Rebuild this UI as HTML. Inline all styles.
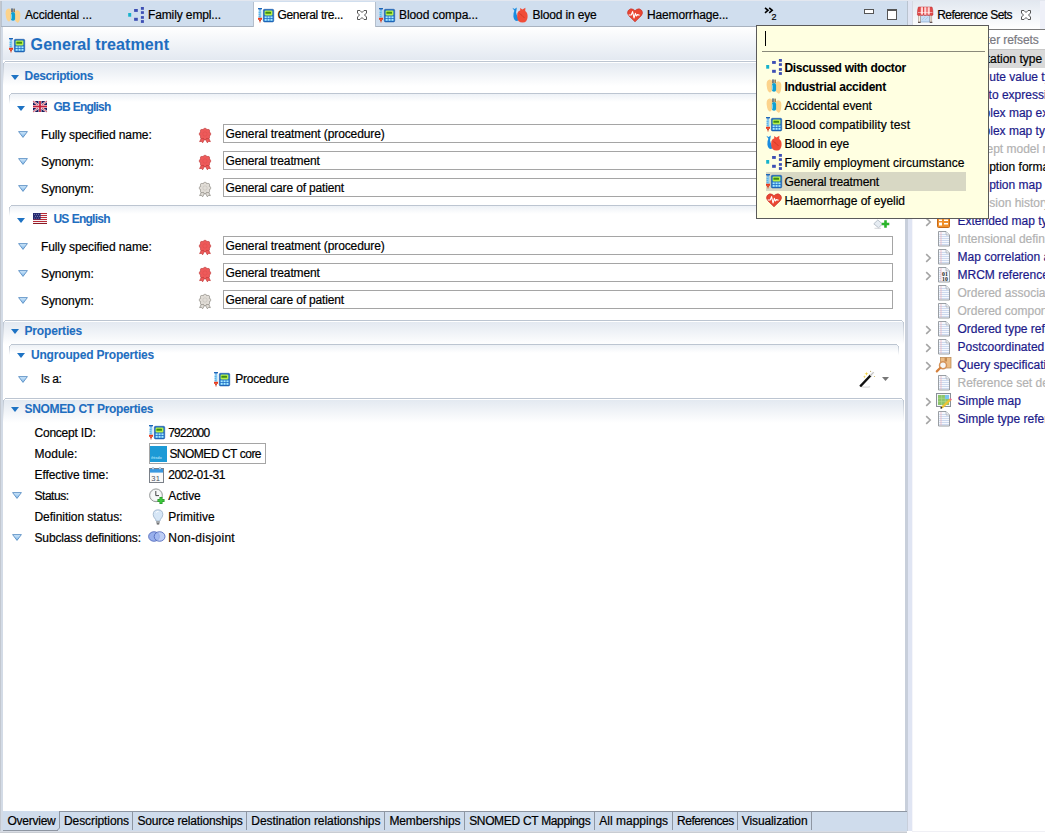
<!DOCTYPE html>
<html><head><meta charset="utf-8"><style>
html,body{margin:0;padding:0;width:1045px;height:833px;overflow:hidden;background:#fff;position:relative}
.t{position:absolute;font-family:"Liberation Sans", sans-serif;white-space:pre;-webkit-text-stroke:0.2px currentColor}
svg{overflow:visible}
</style></head><body>
<div style="position:absolute;left:0px;top:0px;width:1045px;height:833px;background:#fff"></div>
<div style="position:absolute;left:0px;top:0px;width:1045px;height:2px;background:#e3e7ef"></div>
<div style="position:absolute;left:0px;top:1px;width:1px;height:832px;background:#c3c8d0"></div>
<div style="position:absolute;left:1px;top:27px;width:2px;height:804px;background:#d3dbe6"></div>
<div style="position:absolute;left:1px;top:1px;width:907px;height:25px;background:#d0deee"></div>
<div style="position:absolute;left:1px;top:1px;width:1px;height:26px;background:#b9c3cf"></div>
<div style="position:absolute;left:1px;top:26px;width:907px;height:1px;background:#a9b3c0"></div>
<div style="position:absolute;left:907px;top:1px;width:1px;height:26px;background:#b9c3cf"></div>
<div style="position:absolute;left:905px;top:27px;width:3px;height:804px;background:#c8cfdb"></div>
<div style="position:absolute;left:908px;top:1px;width:4px;height:830px;background:#e0e5f3"></div>
<div style="position:absolute;left:912px;top:30px;width:1px;height:801px;background:#f6f6fa"></div>
<div style="position:absolute;left:912px;top:831px;width:133px;height:1px;background:#f0f0f5"></div>
<div style="position:absolute;left:0px;top:831px;width:907px;height:1px;background:#d8dce4"></div>
<div style="position:absolute;left:0px;top:832px;width:907px;height:1px;background:#c8ccd2"></div>
<div style="position:absolute;left:254px;top:2px;width:121px;height:25px;background:#fff"></div>
<div style="position:absolute;left:253px;top:2px;width:1px;height:25px;background:#b5bfcc"></div>
<div style="position:absolute;left:375px;top:2px;width:1px;height:25px;background:#b5bfcc"></div>
<div style="position:absolute;left:3px;top:27px;width:902px;height:33px;background:linear-gradient(#ffffff,#e3e9f1)"></div>
<div style="position:absolute;left:3px;top:60px;width:902px;height:1px;background:#ffffff"></div>
<div style="position:absolute;left:4px;top:62px;width:899px;height:24px;background:linear-gradient(#e2e8f0,#ffffff)"></div>
<div style="position:absolute;left:5px;top:62px;width:897px;height:1px;background:#ffffff"></div>
<div style="position:absolute;left:5px;top:61px;width:897px;height:1px;background:#bcc5d1"></div>
<div style="position:absolute;left:3px;top:63px;width:1px;height:22px;background:linear-gradient(#bcc5d1,rgba(188,197,209,0))"></div>
<div style="position:absolute;left:903px;top:63px;width:1px;height:22px;background:linear-gradient(#bcc5d1,rgba(188,197,209,0))"></div>
<div style="position:absolute;left:4px;top:62px;width:1px;height:1px;background:#c8d0da"></div>
<div style="position:absolute;left:902px;top:62px;width:1px;height:1px;background:#c8d0da"></div>
<div style="position:absolute;left:10px;top:94px;width:888px;height:8px;background:linear-gradient(#edf1f6,#ffffff)"></div>
<div style="position:absolute;left:11px;top:93px;width:886px;height:1px;background:#bcc5d1"></div>
<div style="position:absolute;left:9px;top:95px;width:1px;height:9px;background:linear-gradient(#bcc5d1,rgba(188,197,209,0))"></div>
<div style="position:absolute;left:898px;top:95px;width:1px;height:9px;background:linear-gradient(#bcc5d1,rgba(188,197,209,0))"></div>
<div style="position:absolute;left:10px;top:94px;width:1px;height:1px;background:#c8d0da"></div>
<div style="position:absolute;left:897px;top:94px;width:1px;height:1px;background:#c8d0da"></div>
<div style="position:absolute;left:10px;top:206px;width:888px;height:8px;background:linear-gradient(#edf1f6,#ffffff)"></div>
<div style="position:absolute;left:11px;top:205px;width:886px;height:1px;background:#bcc5d1"></div>
<div style="position:absolute;left:9px;top:207px;width:1px;height:9px;background:linear-gradient(#bcc5d1,rgba(188,197,209,0))"></div>
<div style="position:absolute;left:898px;top:207px;width:1px;height:9px;background:linear-gradient(#bcc5d1,rgba(188,197,209,0))"></div>
<div style="position:absolute;left:10px;top:206px;width:1px;height:1px;background:#c8d0da"></div>
<div style="position:absolute;left:897px;top:206px;width:1px;height:1px;background:#c8d0da"></div>
<div style="position:absolute;left:4px;top:321px;width:899px;height:24px;background:linear-gradient(#e2e8f0,#ffffff)"></div>
<div style="position:absolute;left:5px;top:321px;width:897px;height:1px;background:#ffffff"></div>
<div style="position:absolute;left:5px;top:320px;width:897px;height:1px;background:#bcc5d1"></div>
<div style="position:absolute;left:3px;top:322px;width:1px;height:22px;background:linear-gradient(#bcc5d1,rgba(188,197,209,0))"></div>
<div style="position:absolute;left:903px;top:322px;width:1px;height:22px;background:linear-gradient(#bcc5d1,rgba(188,197,209,0))"></div>
<div style="position:absolute;left:4px;top:321px;width:1px;height:1px;background:#c8d0da"></div>
<div style="position:absolute;left:902px;top:321px;width:1px;height:1px;background:#c8d0da"></div>
<div style="position:absolute;left:10px;top:345px;width:888px;height:8px;background:linear-gradient(#edf1f6,#ffffff)"></div>
<div style="position:absolute;left:11px;top:344px;width:886px;height:1px;background:#bcc5d1"></div>
<div style="position:absolute;left:9px;top:346px;width:1px;height:9px;background:linear-gradient(#bcc5d1,rgba(188,197,209,0))"></div>
<div style="position:absolute;left:898px;top:346px;width:1px;height:9px;background:linear-gradient(#bcc5d1,rgba(188,197,209,0))"></div>
<div style="position:absolute;left:10px;top:345px;width:1px;height:1px;background:#c8d0da"></div>
<div style="position:absolute;left:897px;top:345px;width:1px;height:1px;background:#c8d0da"></div>
<div style="position:absolute;left:4px;top:399px;width:899px;height:24px;background:linear-gradient(#e2e8f0,#ffffff)"></div>
<div style="position:absolute;left:5px;top:399px;width:897px;height:1px;background:#ffffff"></div>
<div style="position:absolute;left:5px;top:398px;width:897px;height:1px;background:#bcc5d1"></div>
<div style="position:absolute;left:3px;top:400px;width:1px;height:22px;background:linear-gradient(#bcc5d1,rgba(188,197,209,0))"></div>
<div style="position:absolute;left:903px;top:400px;width:1px;height:22px;background:linear-gradient(#bcc5d1,rgba(188,197,209,0))"></div>
<div style="position:absolute;left:4px;top:399px;width:1px;height:1px;background:#c8d0da"></div>
<div style="position:absolute;left:902px;top:399px;width:1px;height:1px;background:#c8d0da"></div>
<svg style="position:absolute;left:9px;top:37px;" width="16" height="16" viewBox="0 0 16 16">
<rect x="0" y="1" width="4" height="1.4" fill="#1f68b8"/>
<rect x="1" y="2.4" width="2" height="1.2" fill="#2a7ad0"/>
<rect x="0.6" y="3.4" width="2.8" height="7.4" fill="#86ccf2"/>
<path d="M0.6 5.5 H2.4 M0.6 7.5 H2 M0.6 9.5 H2.4" stroke="#4a9ee0" stroke-width="0.6"/>
<rect x="0" y="10.8" width="4" height="2" fill="#ea3a1c"/>
<rect x="1" y="12.8" width="2" height="1.6" fill="#d84a30"/>
<rect x="1.5" y="14.4" width="1" height="1.2" fill="#d86a50"/>
<rect x="5.3" y="2.3" width="10.4" height="12.6" rx="1.2" fill="#1e6ec8" stroke="#1a58a0" stroke-width="0.6"/>
<rect x="6.6" y="3.6" width="7.8" height="4.8" rx="1" fill="#b6f04a"/>
<rect x="7.4" y="4.8" width="5.6" height="2" rx="0.6" fill="#3e8c12"/>
<g fill="#a6ecff"><rect x="6.6" y="9.4" width="2.1" height="1.8"/><rect x="9.5" y="9.4" width="2.1" height="1.8"/><rect x="12.4" y="9.4" width="2.1" height="1.8"/>
<rect x="6.6" y="12" width="2.1" height="1.8"/><rect x="9.5" y="12" width="2.1" height="1.8"/><rect x="12.4" y="12" width="2.1" height="1.8"/></g></svg>
<div class="t" style="left:30.6px;top:35px;font-size:16px;line-height:20px;font-weight:bold;color:#1f6ec0;letter-spacing:0.091px;-webkit-text-stroke:0.08px currentColor;">General treatment</div>
<svg style="position:absolute;left:11px;top:75px;" width="8" height="5" viewBox="0 0 8 5"><path d="M0 0 L8 0 L4.0 5 Z" fill="#1e73c4"/></svg>
<div class="t" style="left:24.6px;top:69px;font-size:12px;line-height:14px;font-weight:bold;color:#1f6ec0;letter-spacing:-0.357px;-webkit-text-stroke:0.08px currentColor;">Descriptions</div>
<svg style="position:absolute;left:17px;top:106px;" width="8" height="5" viewBox="0 0 8 5"><path d="M0 0 L8 0 L4.0 5 Z" fill="#1e73c4"/></svg>
<svg style="position:absolute;left:33px;top:101px;" width="14" height="11" viewBox="0 0 14 11">
<rect x="0" y="0" width="14" height="11" fill="#1a1c5c"/>
<path d="M0 0 L14 11 M14 0 L0 11" stroke="#f4e8ec" stroke-width="2.2"/>
<path d="M0 0 L14 11 M14 0 L0 11" stroke="#c8203a" stroke-width="0.7"/>
<rect x="0" y="4" width="14" height="3" fill="#f8f0f2"/><rect x="5.5" y="0" width="3" height="11" fill="#f8f0f2"/>
<rect x="0" y="4.6" width="14" height="1.8" fill="#c41e3a"/><rect x="6.1" y="0" width="1.8" height="11" fill="#c41e3a"/></svg>
<div class="t" style="left:53.4px;top:100px;font-size:12px;line-height:14px;font-weight:bold;color:#1f6ec0;letter-spacing:-0.818px;word-spacing:0.511px;-webkit-text-stroke:0.08px currentColor;">GB English</div>
<svg style="position:absolute;left:18px;top:131px;" width="10" height="7" viewBox="0 0 10 7"><defs><linearGradient id="tg" x1="0" y1="0" x2="0" y2="1"><stop offset="0" stop-color="#d8ecfc"/><stop offset="1" stop-color="#78b4e8"/></linearGradient></defs>
<path d="M0.6 0.6 L9.4 0.6 L5 6.4 Z" fill="url(#tg)" stroke="#5a8ec4" stroke-width="0.9" stroke-linejoin="round"/></svg>
<div class="t" style="left:41px;top:128px;font-size:12px;line-height:14px;font-weight:normal;color:#000;letter-spacing:-0.107px;word-spacing:0.067px;">Fully specified name:</div>
<svg style="position:absolute;left:199px;top:127.5px;" width="13" height="15" viewBox="0 0 13 15">
<path d="M3 9 L0.6 13.6 L2.6 13.4 L3.6 14.8 L6 10.6 Z M9 9 L11.4 13.6 L9.4 13.4 L8.4 14.8 L6 10.6 Z" fill="#ee5a5a" stroke="#c03a3a" stroke-width="0.7" stroke-linejoin="round"/>
<g fill="#ee5a5a" stroke="#c03a3a" stroke-width="0.6">
<circle cx="6" cy="1.9" r="1.7"/><circle cx="9" cy="3" r="1.7"/><circle cx="10.1" cy="6" r="1.7"/><circle cx="9" cy="9" r="1.7"/>
<circle cx="6" cy="10.1" r="1.7"/><circle cx="3" cy="9" r="1.7"/><circle cx="1.9" cy="6" r="1.7"/><circle cx="3" cy="3" r="1.7"/></g>
<circle cx="6" cy="6" r="4.3" fill="#ee5a5a"/>
<circle cx="6" cy="6" r="2.2" fill="none" stroke="#c03a3a" stroke-width="0.4" opacity="0.5"/></svg>
<div style="position:absolute;left:223px;top:124px;width:670px;height:19px;border:1px solid #a5a5a5;box-sizing:border-box;background:#fff"></div>
<div class="t" style="left:225.5px;top:127px;font-size:12px;line-height:14px;font-weight:normal;color:#000;letter-spacing:-0.104px;word-spacing:0.064px;">General treatment (procedure)</div>
<svg style="position:absolute;left:18px;top:158px;" width="10" height="7" viewBox="0 0 10 7"><defs><linearGradient id="tg" x1="0" y1="0" x2="0" y2="1"><stop offset="0" stop-color="#d8ecfc"/><stop offset="1" stop-color="#78b4e8"/></linearGradient></defs>
<path d="M0.6 0.6 L9.4 0.6 L5 6.4 Z" fill="url(#tg)" stroke="#5a8ec4" stroke-width="0.9" stroke-linejoin="round"/></svg>
<div class="t" style="left:41px;top:155px;font-size:12px;line-height:14px;font-weight:normal;color:#000;letter-spacing:-0.070px;">Synonym:</div>
<svg style="position:absolute;left:199px;top:154.5px;" width="13" height="15" viewBox="0 0 13 15">
<path d="M3 9 L0.6 13.6 L2.6 13.4 L3.6 14.8 L6 10.6 Z M9 9 L11.4 13.6 L9.4 13.4 L8.4 14.8 L6 10.6 Z" fill="#ee5a5a" stroke="#c03a3a" stroke-width="0.7" stroke-linejoin="round"/>
<g fill="#ee5a5a" stroke="#c03a3a" stroke-width="0.6">
<circle cx="6" cy="1.9" r="1.7"/><circle cx="9" cy="3" r="1.7"/><circle cx="10.1" cy="6" r="1.7"/><circle cx="9" cy="9" r="1.7"/>
<circle cx="6" cy="10.1" r="1.7"/><circle cx="3" cy="9" r="1.7"/><circle cx="1.9" cy="6" r="1.7"/><circle cx="3" cy="3" r="1.7"/></g>
<circle cx="6" cy="6" r="4.3" fill="#ee5a5a"/>
<circle cx="6" cy="6" r="2.2" fill="none" stroke="#c03a3a" stroke-width="0.4" opacity="0.5"/></svg>
<div style="position:absolute;left:223px;top:151px;width:670px;height:19px;border:1px solid #a5a5a5;box-sizing:border-box;background:#fff"></div>
<div class="t" style="left:225.5px;top:154px;font-size:12px;line-height:14px;font-weight:normal;color:#000;letter-spacing:-0.160px;word-spacing:0.098px;">General treatment</div>
<svg style="position:absolute;left:18px;top:185px;" width="10" height="7" viewBox="0 0 10 7"><defs><linearGradient id="tg" x1="0" y1="0" x2="0" y2="1"><stop offset="0" stop-color="#d8ecfc"/><stop offset="1" stop-color="#78b4e8"/></linearGradient></defs>
<path d="M0.6 0.6 L9.4 0.6 L5 6.4 Z" fill="url(#tg)" stroke="#5a8ec4" stroke-width="0.9" stroke-linejoin="round"/></svg>
<div class="t" style="left:41px;top:182px;font-size:12px;line-height:14px;font-weight:normal;color:#000;letter-spacing:-0.070px;">Synonym:</div>
<svg style="position:absolute;left:199px;top:181.5px;" width="13" height="15" viewBox="0 0 13 15">
<path d="M3 9 L0.6 13.6 L2.6 13.4 L3.6 14.8 L6 10.6 Z M9 9 L11.4 13.6 L9.4 13.4 L8.4 14.8 L6 10.6 Z" fill="#e0dcd6" stroke="#8a8680" stroke-width="0.7" stroke-linejoin="round"/>
<g fill="#e0dcd6" stroke="#8a8680" stroke-width="0.6">
<circle cx="6" cy="1.9" r="1.7"/><circle cx="9" cy="3" r="1.7"/><circle cx="10.1" cy="6" r="1.7"/><circle cx="9" cy="9" r="1.7"/>
<circle cx="6" cy="10.1" r="1.7"/><circle cx="3" cy="9" r="1.7"/><circle cx="1.9" cy="6" r="1.7"/><circle cx="3" cy="3" r="1.7"/></g>
<circle cx="6" cy="6" r="4.3" fill="#e0dcd6"/>
<circle cx="6" cy="6" r="2.2" fill="none" stroke="#8a8680" stroke-width="0.4" opacity="0.5"/></svg>
<div style="position:absolute;left:223px;top:178px;width:670px;height:19px;border:1px solid #a5a5a5;box-sizing:border-box;background:#fff"></div>
<div class="t" style="left:225.5px;top:181px;font-size:12px;line-height:14px;font-weight:normal;color:#000;letter-spacing:-0.174px;word-spacing:0.110px;">General care of patient</div>
<svg style="position:absolute;left:17px;top:218px;" width="8" height="5" viewBox="0 0 8 5"><path d="M0 0 L8 0 L4.0 5 Z" fill="#1e73c4"/></svg>
<svg style="position:absolute;left:33px;top:213px;" width="14" height="11" viewBox="0 0 14 11">
<rect x="0" y="0" width="14" height="11" fill="#f6f2f4"/>
<g fill="#b82a36"><rect x="0" y="0" width="14" height="1"/><rect x="0" y="2" width="14" height="1"/><rect x="0" y="4" width="14" height="1"/><rect x="0" y="6" width="14" height="1"/><rect x="0" y="8" width="14" height="1"/><rect x="0" y="10" width="14" height="1" fill="#8a1a24"/></g>
<rect x="0" y="0" width="7.6" height="6.5" fill="#24286e"/>
<g fill="#c8cce8"><circle cx="1.5" cy="1.3" r="0.45"/><circle cx="3.5" cy="1.3" r="0.45"/><circle cx="5.5" cy="1.3" r="0.45"/><circle cx="2.5" cy="3.2" r="0.45"/><circle cx="4.5" cy="3.2" r="0.45"/><circle cx="6.5" cy="3.2" r="0.45"/><circle cx="1.5" cy="5.1" r="0.45"/><circle cx="3.5" cy="5.1" r="0.45"/><circle cx="5.5" cy="5.1" r="0.45"/></g></svg>
<div class="t" style="left:53.4px;top:212px;font-size:12px;line-height:14px;font-weight:bold;color:#1f6ec0;letter-spacing:-0.741px;word-spacing:0.463px;-webkit-text-stroke:0.08px currentColor;">US English</div>
<svg style="position:absolute;left:18px;top:243px;" width="10" height="7" viewBox="0 0 10 7"><defs><linearGradient id="tg" x1="0" y1="0" x2="0" y2="1"><stop offset="0" stop-color="#d8ecfc"/><stop offset="1" stop-color="#78b4e8"/></linearGradient></defs>
<path d="M0.6 0.6 L9.4 0.6 L5 6.4 Z" fill="url(#tg)" stroke="#5a8ec4" stroke-width="0.9" stroke-linejoin="round"/></svg>
<div class="t" style="left:41px;top:240px;font-size:12px;line-height:14px;font-weight:normal;color:#000;letter-spacing:-0.107px;word-spacing:0.067px;">Fully specified name:</div>
<svg style="position:absolute;left:199px;top:239.5px;" width="13" height="15" viewBox="0 0 13 15">
<path d="M3 9 L0.6 13.6 L2.6 13.4 L3.6 14.8 L6 10.6 Z M9 9 L11.4 13.6 L9.4 13.4 L8.4 14.8 L6 10.6 Z" fill="#ee5a5a" stroke="#c03a3a" stroke-width="0.7" stroke-linejoin="round"/>
<g fill="#ee5a5a" stroke="#c03a3a" stroke-width="0.6">
<circle cx="6" cy="1.9" r="1.7"/><circle cx="9" cy="3" r="1.7"/><circle cx="10.1" cy="6" r="1.7"/><circle cx="9" cy="9" r="1.7"/>
<circle cx="6" cy="10.1" r="1.7"/><circle cx="3" cy="9" r="1.7"/><circle cx="1.9" cy="6" r="1.7"/><circle cx="3" cy="3" r="1.7"/></g>
<circle cx="6" cy="6" r="4.3" fill="#ee5a5a"/>
<circle cx="6" cy="6" r="2.2" fill="none" stroke="#c03a3a" stroke-width="0.4" opacity="0.5"/></svg>
<div style="position:absolute;left:223px;top:236px;width:670px;height:19px;border:1px solid #a5a5a5;box-sizing:border-box;background:#fff"></div>
<div class="t" style="left:225.5px;top:239px;font-size:12px;line-height:14px;font-weight:normal;color:#000;letter-spacing:-0.104px;word-spacing:0.064px;">General treatment (procedure)</div>
<svg style="position:absolute;left:18px;top:270px;" width="10" height="7" viewBox="0 0 10 7"><defs><linearGradient id="tg" x1="0" y1="0" x2="0" y2="1"><stop offset="0" stop-color="#d8ecfc"/><stop offset="1" stop-color="#78b4e8"/></linearGradient></defs>
<path d="M0.6 0.6 L9.4 0.6 L5 6.4 Z" fill="url(#tg)" stroke="#5a8ec4" stroke-width="0.9" stroke-linejoin="round"/></svg>
<div class="t" style="left:41px;top:267px;font-size:12px;line-height:14px;font-weight:normal;color:#000;letter-spacing:-0.070px;">Synonym:</div>
<svg style="position:absolute;left:199px;top:266.5px;" width="13" height="15" viewBox="0 0 13 15">
<path d="M3 9 L0.6 13.6 L2.6 13.4 L3.6 14.8 L6 10.6 Z M9 9 L11.4 13.6 L9.4 13.4 L8.4 14.8 L6 10.6 Z" fill="#ee5a5a" stroke="#c03a3a" stroke-width="0.7" stroke-linejoin="round"/>
<g fill="#ee5a5a" stroke="#c03a3a" stroke-width="0.6">
<circle cx="6" cy="1.9" r="1.7"/><circle cx="9" cy="3" r="1.7"/><circle cx="10.1" cy="6" r="1.7"/><circle cx="9" cy="9" r="1.7"/>
<circle cx="6" cy="10.1" r="1.7"/><circle cx="3" cy="9" r="1.7"/><circle cx="1.9" cy="6" r="1.7"/><circle cx="3" cy="3" r="1.7"/></g>
<circle cx="6" cy="6" r="4.3" fill="#ee5a5a"/>
<circle cx="6" cy="6" r="2.2" fill="none" stroke="#c03a3a" stroke-width="0.4" opacity="0.5"/></svg>
<div style="position:absolute;left:223px;top:263px;width:670px;height:19px;border:1px solid #a5a5a5;box-sizing:border-box;background:#fff"></div>
<div class="t" style="left:225.5px;top:266px;font-size:12px;line-height:14px;font-weight:normal;color:#000;letter-spacing:-0.160px;word-spacing:0.098px;">General treatment</div>
<svg style="position:absolute;left:18px;top:297px;" width="10" height="7" viewBox="0 0 10 7"><defs><linearGradient id="tg" x1="0" y1="0" x2="0" y2="1"><stop offset="0" stop-color="#d8ecfc"/><stop offset="1" stop-color="#78b4e8"/></linearGradient></defs>
<path d="M0.6 0.6 L9.4 0.6 L5 6.4 Z" fill="url(#tg)" stroke="#5a8ec4" stroke-width="0.9" stroke-linejoin="round"/></svg>
<div class="t" style="left:41px;top:294px;font-size:12px;line-height:14px;font-weight:normal;color:#000;letter-spacing:-0.070px;">Synonym:</div>
<svg style="position:absolute;left:199px;top:293.5px;" width="13" height="15" viewBox="0 0 13 15">
<path d="M3 9 L0.6 13.6 L2.6 13.4 L3.6 14.8 L6 10.6 Z M9 9 L11.4 13.6 L9.4 13.4 L8.4 14.8 L6 10.6 Z" fill="#e0dcd6" stroke="#8a8680" stroke-width="0.7" stroke-linejoin="round"/>
<g fill="#e0dcd6" stroke="#8a8680" stroke-width="0.6">
<circle cx="6" cy="1.9" r="1.7"/><circle cx="9" cy="3" r="1.7"/><circle cx="10.1" cy="6" r="1.7"/><circle cx="9" cy="9" r="1.7"/>
<circle cx="6" cy="10.1" r="1.7"/><circle cx="3" cy="9" r="1.7"/><circle cx="1.9" cy="6" r="1.7"/><circle cx="3" cy="3" r="1.7"/></g>
<circle cx="6" cy="6" r="4.3" fill="#e0dcd6"/>
<circle cx="6" cy="6" r="2.2" fill="none" stroke="#8a8680" stroke-width="0.4" opacity="0.5"/></svg>
<div style="position:absolute;left:223px;top:290px;width:670px;height:19px;border:1px solid #a5a5a5;box-sizing:border-box;background:#fff"></div>
<div class="t" style="left:225.5px;top:293px;font-size:12px;line-height:14px;font-weight:normal;color:#000;letter-spacing:-0.174px;word-spacing:0.110px;">General care of patient</div>
<svg style="position:absolute;left:873px;top:219px;" width="17" height="10" viewBox="0 0 17 10"><path d="M0.8 4.8 L4.8 1 L9.5 5 L5.5 8.8 Z" fill="#e6ecf2" stroke="#aab4be" stroke-width="0.8"/><path d="M1.5 9.3 H8" stroke="#c8ccd0" stroke-width="0.8"/><path d="M12.5 1.2 V8.8 M8.7 5 H16.3" stroke="#2ab42a" stroke-width="2.6"/></svg>
<svg style="position:absolute;left:11px;top:329px;" width="8" height="5" viewBox="0 0 8 5"><path d="M0 0 L8 0 L4.0 5 Z" fill="#1e73c4"/></svg>
<div class="t" style="left:24.5px;top:324px;font-size:12px;line-height:14px;font-weight:bold;color:#1f6ec0;letter-spacing:-0.176px;-webkit-text-stroke:0.08px currentColor;">Properties</div>
<svg style="position:absolute;left:17px;top:353px;" width="8" height="5" viewBox="0 0 8 5"><path d="M0 0 L8 0 L4.0 5 Z" fill="#1e73c4"/></svg>
<div class="t" style="left:31px;top:348px;font-size:12px;line-height:14px;font-weight:bold;color:#1f6ec0;letter-spacing:-0.190px;word-spacing:0.116px;-webkit-text-stroke:0.08px currentColor;">Ungrouped Properties</div>
<svg style="position:absolute;left:18px;top:376px;" width="10" height="7" viewBox="0 0 10 7"><defs><linearGradient id="tg" x1="0" y1="0" x2="0" y2="1"><stop offset="0" stop-color="#d8ecfc"/><stop offset="1" stop-color="#78b4e8"/></linearGradient></defs>
<path d="M0.6 0.6 L9.4 0.6 L5 6.4 Z" fill="url(#tg)" stroke="#5a8ec4" stroke-width="0.9" stroke-linejoin="round"/></svg>
<div class="t" style="left:40.8px;top:372px;font-size:12px;line-height:14px;font-weight:normal;color:#000;letter-spacing:-0.503px;word-spacing:0.328px;">Is a:</div>
<svg style="position:absolute;left:214px;top:371px;" width="16" height="16" viewBox="0 0 16 16">
<rect x="0" y="1" width="4" height="1.4" fill="#1f68b8"/>
<rect x="1" y="2.4" width="2" height="1.2" fill="#2a7ad0"/>
<rect x="0.6" y="3.4" width="2.8" height="7.4" fill="#86ccf2"/>
<path d="M0.6 5.5 H2.4 M0.6 7.5 H2 M0.6 9.5 H2.4" stroke="#4a9ee0" stroke-width="0.6"/>
<rect x="0" y="10.8" width="4" height="2" fill="#ea3a1c"/>
<rect x="1" y="12.8" width="2" height="1.6" fill="#d84a30"/>
<rect x="1.5" y="14.4" width="1" height="1.2" fill="#d86a50"/>
<rect x="5.3" y="2.3" width="10.4" height="12.6" rx="1.2" fill="#1e6ec8" stroke="#1a58a0" stroke-width="0.6"/>
<rect x="6.6" y="3.6" width="7.8" height="4.8" rx="1" fill="#b6f04a"/>
<rect x="7.4" y="4.8" width="5.6" height="2" rx="0.6" fill="#3e8c12"/>
<g fill="#a6ecff"><rect x="6.6" y="9.4" width="2.1" height="1.8"/><rect x="9.5" y="9.4" width="2.1" height="1.8"/><rect x="12.4" y="9.4" width="2.1" height="1.8"/>
<rect x="6.6" y="12" width="2.1" height="1.8"/><rect x="9.5" y="12" width="2.1" height="1.8"/><rect x="12.4" y="12" width="2.1" height="1.8"/></g></svg>
<div class="t" style="left:235.2px;top:372px;font-size:12px;line-height:14px;font-weight:normal;color:#000;letter-spacing:-0.186px;">Procedure</div>
<svg style="position:absolute;left:859px;top:371px;" width="17" height="17" viewBox="0 0 17 17"><path d="M3 15.8 Q8 16.6 11 15.6" stroke="#ddd" stroke-width="1.2" fill="none"/><path d="M2 14.6 L11.4 4.6" stroke="#111" stroke-width="2.4" stroke-linecap="square"/><path d="M11.4 4.6 L14.6 1.2" stroke="#e8e8e8" stroke-width="2.4"/><path d="M11.8 4.2 L14.8 1" stroke="#999" stroke-width="0.5"/><path d="M7.5 0.8 L8 2.3 L9.5 2.8 L8 3.3 L7.5 4.8 L7 3.3 L5.5 2.8 L7 2.3 Z" fill="#f0d040"/><path d="M5.5 4.3 L5.9 5.4 L7 5.8 L5.9 6.2 L5.5 7.3 L5.1 6.2 L4 5.8 L5.1 5.4 Z" fill="#e8cc50"/><circle cx="11.6" cy="0.3" r="0.6" fill="#b8a860"/><circle cx="15.5" cy="5.5" r="0.6" fill="#c8b860"/></svg>
<svg style="position:absolute;left:882px;top:377px;" width="7" height="4" viewBox="0 0 7 4"><path d="M0 0 L7 0 L3.5 4 Z" fill="#777"/></svg>
<svg style="position:absolute;left:11px;top:407px;" width="8" height="5" viewBox="0 0 8 5"><path d="M0 0 L8 0 L4.0 5 Z" fill="#1e73c4"/></svg>
<div class="t" style="left:24.5px;top:402px;font-size:12px;line-height:14px;font-weight:bold;color:#1f6ec0;letter-spacing:-0.326px;word-spacing:0.203px;-webkit-text-stroke:0.08px currentColor;">SNOMED CT Properties</div>
<div class="t" style="left:34.5px;top:426px;font-size:12px;line-height:14px;font-weight:normal;color:#000;letter-spacing:-0.229px;word-spacing:0.142px;">Concept ID:</div>
<div class="t" style="left:168.2px;top:426px;font-size:12px;line-height:14px;font-weight:normal;color:#000;letter-spacing:-0.803px;">7922000</div>
<div class="t" style="left:34.5px;top:447px;font-size:12px;line-height:14px;font-weight:normal;color:#000;letter-spacing:0.014px;">Module:</div>
<div class="t" style="left:169.4px;top:447px;font-size:12px;line-height:14px;font-weight:normal;color:#000;letter-spacing:-0.540px;word-spacing:0.343px;">SNOMED CT core</div>
<div class="t" style="left:34.5px;top:468px;font-size:12px;line-height:14px;font-weight:normal;color:#000;letter-spacing:-0.086px;word-spacing:0.053px;">Effective time:</div>
<div class="t" style="left:168.2px;top:468px;font-size:12px;line-height:14px;font-weight:normal;color:#000;letter-spacing:-0.469px;">2002-01-31</div>
<div class="t" style="left:34.5px;top:489px;font-size:12px;line-height:14px;font-weight:normal;color:#000;letter-spacing:-0.466px;">Status:</div>
<div class="t" style="left:168.2px;top:489px;font-size:12px;line-height:14px;font-weight:normal;color:#000;letter-spacing:-0.015px;">Active</div>
<div class="t" style="left:34.5px;top:510px;font-size:12px;line-height:14px;font-weight:normal;color:#000;letter-spacing:-0.047px;word-spacing:0.029px;">Definition status:</div>
<div class="t" style="left:168.2px;top:510px;font-size:12px;line-height:14px;font-weight:normal;color:#000;letter-spacing:0.065px;">Primitive</div>
<div class="t" style="left:34.5px;top:531px;font-size:12px;line-height:14px;font-weight:normal;color:#000;letter-spacing:-0.147px;word-spacing:0.090px;">Subclass definitions:</div>
<div class="t" style="left:168.2px;top:531px;font-size:12px;line-height:14px;font-weight:normal;color:#000;letter-spacing:0.285px;">Non-disjoint</div>
<svg style="position:absolute;left:12px;top:492px;" width="10" height="7" viewBox="0 0 10 7"><defs><linearGradient id="tg" x1="0" y1="0" x2="0" y2="1"><stop offset="0" stop-color="#d8ecfc"/><stop offset="1" stop-color="#78b4e8"/></linearGradient></defs>
<path d="M0.6 0.6 L9.4 0.6 L5 6.4 Z" fill="url(#tg)" stroke="#5a8ec4" stroke-width="0.9" stroke-linejoin="round"/></svg>
<svg style="position:absolute;left:12px;top:534px;" width="10" height="7" viewBox="0 0 10 7"><defs><linearGradient id="tg" x1="0" y1="0" x2="0" y2="1"><stop offset="0" stop-color="#d8ecfc"/><stop offset="1" stop-color="#78b4e8"/></linearGradient></defs>
<path d="M0.6 0.6 L9.4 0.6 L5 6.4 Z" fill="url(#tg)" stroke="#5a8ec4" stroke-width="0.9" stroke-linejoin="round"/></svg>
<svg style="position:absolute;left:149px;top:424px;" width="16" height="16" viewBox="0 0 16 16">
<rect x="0" y="1" width="4" height="1.4" fill="#1f68b8"/>
<rect x="1" y="2.4" width="2" height="1.2" fill="#2a7ad0"/>
<rect x="0.6" y="3.4" width="2.8" height="7.4" fill="#86ccf2"/>
<path d="M0.6 5.5 H2.4 M0.6 7.5 H2 M0.6 9.5 H2.4" stroke="#4a9ee0" stroke-width="0.6"/>
<rect x="0" y="10.8" width="4" height="2" fill="#ea3a1c"/>
<rect x="1" y="12.8" width="2" height="1.6" fill="#d84a30"/>
<rect x="1.5" y="14.4" width="1" height="1.2" fill="#d86a50"/>
<rect x="5.3" y="2.3" width="10.4" height="12.6" rx="1.2" fill="#1e6ec8" stroke="#1a58a0" stroke-width="0.6"/>
<rect x="6.6" y="3.6" width="7.8" height="4.8" rx="1" fill="#b6f04a"/>
<rect x="7.4" y="4.8" width="5.6" height="2" rx="0.6" fill="#3e8c12"/>
<g fill="#a6ecff"><rect x="6.6" y="9.4" width="2.1" height="1.8"/><rect x="9.5" y="9.4" width="2.1" height="1.8"/><rect x="12.4" y="9.4" width="2.1" height="1.8"/>
<rect x="6.6" y="12" width="2.1" height="1.8"/><rect x="9.5" y="12" width="2.1" height="1.8"/><rect x="12.4" y="12" width="2.1" height="1.8"/></g></svg>
<div style="position:absolute;left:149px;top:443px;width:117px;height:21px;border:1px solid #a5a5a5;box-sizing:border-box"></div>
<svg style="position:absolute;left:150px;top:446px;" width="17" height="16" viewBox="0 0 17 16"><rect x="0" y="0" width="17" height="16" fill="#1c9ad6"/><text x="1" y="13" font-family="Liberation Sans" font-size="4" fill="#cfefff">ihtsdo</text></svg>
<svg style="position:absolute;left:149px;top:467px;" width="16" height="16" viewBox="0 0 16 16"><rect x="0.5" y="1.5" width="14" height="14" fill="#fafafa" stroke="#7a8088"/><rect x="1" y="2" width="13" height="3.6" fill="#3a98e0"/><circle cx="4" cy="1.5" r="1" fill="#fff" stroke="#3a80c0" stroke-width="0.5"/><circle cx="11" cy="1.5" r="1" fill="#fff" stroke="#3a80c0" stroke-width="0.5"/><text x="2.3" y="13.6" font-family="Liberation Sans" font-size="7.6" fill="#4a5260" letter-spacing="0.3">31</text></svg>
<svg style="position:absolute;left:149px;top:488px;" width="17" height="16" viewBox="0 0 17 16"><circle cx="7" cy="7.3" r="6.4" fill="#eceeee" stroke="#8c9090" stroke-width="0.9"/><circle cx="7" cy="7.3" r="5" fill="#f6f8f8"/><path d="M6.8 3 V7.6 H10" stroke="#333" stroke-width="0.9" fill="none"/><path d="M12 9 V16 M8.5 12.5 H15.5" stroke="#1e8a1e" stroke-width="3"/><path d="M12 9.6 V15.4 M9.1 12.5 H14.9" stroke="#3cc83c" stroke-width="1.8"/></svg>
<svg style="position:absolute;left:152px;top:509px;" width="12" height="16" viewBox="0 0 12 16"><path d="M6 0.8 Q10.8 0.8 10.8 5.6 Q10.8 8 8.4 10.4 L8 12 H4 L3.6 10.4 Q1.2 8 1.2 5.6 Q1.2 0.8 6 0.8 Z" fill="#d6e6f6" stroke="#98aec6" stroke-width="0.8"/><path d="M4 3.5 Q5 2.2 6.5 2.5" stroke="#fff" stroke-width="1" fill="none"/><rect x="4.2" y="12" width="3.6" height="2.4" fill="#a0a4a8"/><rect x="4.8" y="14.4" width="2.4" height="1" fill="#303030"/></svg>
<svg style="position:absolute;left:148px;top:531px;" width="18" height="11" viewBox="0 0 18 11"><ellipse cx="6" cy="5.5" rx="5.4" ry="4.8" fill="#98b0ec" stroke="#4a62b8" stroke-width="0.8"/><ellipse cx="11.6" cy="5.5" rx="5.4" ry="4.8" fill="#a8bef2" fill-opacity="0.75" stroke="#4a62b8" stroke-width="0.8"/></svg>
<svg style="position:absolute;left:5px;top:7px;" width="16" height="16" viewBox="0 0 16 16">
<path d="M0.6 7 Q0.4 1.8 3.8 1.6 Q7 1.8 6.8 7 Q6.6 10.5 5.8 12.6 Q5 14.8 3.6 14.4 Q1.6 13.8 1.1 10.5 Z" fill="#fcd38c"/>
<path d="M9.2 8.6 Q9 3.4 12.2 3.2 Q15.6 3.4 15.4 8.6 Q15.2 12 14.4 14 Q13.6 16 12.2 15.6 Q10.2 15.1 9.7 12 Z" fill="#fcd38c"/>
<rect x="6.4" y="1.4" width="1.2" height="3.8" fill="#28384e"/><rect x="8.5" y="1.6" width="1.2" height="3.6" fill="#6a5228"/>
<path d="M5.9 7 Q5.9 5 8 5 Q10.1 5 10.1 7 L10.1 12 Q10.1 13.8 8 13.8 Q5.9 13.8 5.9 12 Z" fill="#10a0d2"/>
<path d="M6.5 7.2 V11.8" stroke="#90e0fa" stroke-width="0.8"/></svg>
<div class="t" style="left:24.9px;top:8px;font-size:12px;line-height:14px;font-weight:normal;color:#000;letter-spacing:-0.120px;word-spacing:0.074px;">Accidental ...</div>
<svg style="position:absolute;left:128px;top:7px;" width="16" height="16" viewBox="0 0 16 16">
<rect x="0.2" y="6" width="3" height="3.7" fill="#16b2cc"/>
<g fill="#3d4fb4"><rect x="6.1" y="2" width="3.7" height="2.9"/><rect x="6.1" y="10.8" width="3.7" height="3"/>
<rect x="12.9" y="0" width="3" height="2.8"/><rect x="12.9" y="4.2" width="3" height="2.7"/><rect x="12.9" y="9.1" width="3" height="2.7"/><rect x="12.9" y="13.1" width="3" height="2.8"/></g></svg>
<div class="t" style="left:148px;top:8px;font-size:12px;line-height:14px;font-weight:normal;color:#000;letter-spacing:-0.126px;word-spacing:0.078px;">Family empl...</div>
<svg style="position:absolute;left:258px;top:7px;" width="16" height="16" viewBox="0 0 16 16">
<rect x="0" y="1" width="4" height="1.4" fill="#1f68b8"/>
<rect x="1" y="2.4" width="2" height="1.2" fill="#2a7ad0"/>
<rect x="0.6" y="3.4" width="2.8" height="7.4" fill="#86ccf2"/>
<path d="M0.6 5.5 H2.4 M0.6 7.5 H2 M0.6 9.5 H2.4" stroke="#4a9ee0" stroke-width="0.6"/>
<rect x="0" y="10.8" width="4" height="2" fill="#ea3a1c"/>
<rect x="1" y="12.8" width="2" height="1.6" fill="#d84a30"/>
<rect x="1.5" y="14.4" width="1" height="1.2" fill="#d86a50"/>
<rect x="5.3" y="2.3" width="10.4" height="12.6" rx="1.2" fill="#1e6ec8" stroke="#1a58a0" stroke-width="0.6"/>
<rect x="6.6" y="3.6" width="7.8" height="4.8" rx="1" fill="#b6f04a"/>
<rect x="7.4" y="4.8" width="5.6" height="2" rx="0.6" fill="#3e8c12"/>
<g fill="#a6ecff"><rect x="6.6" y="9.4" width="2.1" height="1.8"/><rect x="9.5" y="9.4" width="2.1" height="1.8"/><rect x="12.4" y="9.4" width="2.1" height="1.8"/>
<rect x="6.6" y="12" width="2.1" height="1.8"/><rect x="9.5" y="12" width="2.1" height="1.8"/><rect x="12.4" y="12" width="2.1" height="1.8"/></g></svg>
<div class="t" style="left:277.5px;top:8px;font-size:12px;line-height:14px;font-weight:normal;color:#000;letter-spacing:-0.339px;word-spacing:0.209px;">General tre...</div>
<svg style="position:absolute;left:357px;top:10px;" width="10" height="10" viewBox="0 0 10 10"><path d="M0.5 0.5 L3 0.5 L5 2.5 L7 0.5 L9.5 0.5 L9.5 3 L7.5 5 L9.5 7 L9.5 9.5 L7 9.5 L5 7.5 L3 9.5 L0.5 9.5 L0.5 7 L2.5 5 L0.5 3 Z" fill="#fff" stroke="#555" stroke-width="1"/></svg>
<svg style="position:absolute;left:379px;top:7px;" width="16" height="16" viewBox="0 0 16 16">
<rect x="0" y="1" width="4" height="1.4" fill="#1f68b8"/>
<rect x="1" y="2.4" width="2" height="1.2" fill="#2a7ad0"/>
<rect x="0.6" y="3.4" width="2.8" height="7.4" fill="#86ccf2"/>
<path d="M0.6 5.5 H2.4 M0.6 7.5 H2 M0.6 9.5 H2.4" stroke="#4a9ee0" stroke-width="0.6"/>
<rect x="0" y="10.8" width="4" height="2" fill="#ea3a1c"/>
<rect x="1" y="12.8" width="2" height="1.6" fill="#d84a30"/>
<rect x="1.5" y="14.4" width="1" height="1.2" fill="#d86a50"/>
<rect x="5.3" y="2.3" width="10.4" height="12.6" rx="1.2" fill="#1e6ec8" stroke="#1a58a0" stroke-width="0.6"/>
<rect x="6.6" y="3.6" width="7.8" height="4.8" rx="1" fill="#b6f04a"/>
<rect x="7.4" y="4.8" width="5.6" height="2" rx="0.6" fill="#3e8c12"/>
<g fill="#a6ecff"><rect x="6.6" y="9.4" width="2.1" height="1.8"/><rect x="9.5" y="9.4" width="2.1" height="1.8"/><rect x="12.4" y="9.4" width="2.1" height="1.8"/>
<rect x="6.6" y="12" width="2.1" height="1.8"/><rect x="9.5" y="12" width="2.1" height="1.8"/><rect x="12.4" y="12" width="2.1" height="1.8"/></g></svg>
<div class="t" style="left:399px;top:8px;font-size:12px;line-height:14px;font-weight:normal;color:#000;letter-spacing:-0.078px;word-spacing:0.048px;">Blood compa...</div>
<svg style="position:absolute;left:512px;top:7px;" width="16" height="16" viewBox="0 0 16 16">
<path d="M0.3 0.8 L2.6 2 L4.8 0.6 L4.4 3.4 Q3.6 5 4.6 7.4 L6.2 11 Q6.8 14 5 14 Q1.8 13.6 1.4 9.4 Q1 6.2 2.4 3.8 Z" fill="#1a8ce0"/>
<path d="M5.2 8.6 Q5 4.4 8.2 3.6 L8.2 1 L10.4 2.6 L13.4 0.8 L13.2 4 Q15.8 5.6 15.6 10 Q15.2 15.6 10.6 15.6 Q5.6 15.2 5.2 10.4 Z" fill="#f04c38"/>
<path d="M7.5 6.5 Q10 8 12.5 11" stroke="#c8301e" stroke-width="0.7" fill="none"/></svg>
<div class="t" style="left:532.4px;top:8px;font-size:12px;line-height:14px;font-weight:normal;color:#000;letter-spacing:-0.172px;word-spacing:0.111px;">Blood in eye</div>
<svg style="position:absolute;left:627px;top:7px;" width="16" height="16" viewBox="0 0 16 16">
<path d="M8 14.8 L1.8 8.8 Q-0.4 6.2 1.2 3.6 Q3.4 0.8 6.4 2.4 L8 3.8 L9.6 2.4 Q12.6 0.8 14.8 3.6 Q16.4 6.2 14.2 8.8 Z" fill="#ea4632" stroke="#c4302a" stroke-width="0.7"/>
<path d="M1.6 8 L4.2 8 L5.6 4.6 L7 11 L8.4 6.4 L9.4 9 L10.4 7.6 L12.6 8.2" stroke="#fff" stroke-width="1.1" fill="none" stroke-linejoin="round"/></svg>
<div class="t" style="left:647px;top:8px;font-size:12px;line-height:14px;font-weight:normal;color:#000;letter-spacing:-0.148px;">Haemorrhage...</div>
<svg style="position:absolute;left:764px;top:7px;" width="10" height="7" viewBox="0 0 10 7"><path d="M1 0.8 L4 3.3 L1 5.8 M5.2 0.8 L8.2 3.3 L5.2 5.8" stroke="#000" stroke-width="1.6" fill="none"/></svg>
<div class="t" style="left:771.5px;top:10px;font-size:9px;line-height:14px;font-weight:normal;color:#000;">2</div>
<div style="position:absolute;left:864px;top:9px;width:10px;height:5px;border:1px solid #555;box-sizing:border-box;background:#fff"></div>
<div style="position:absolute;left:887px;top:9px;width:10px;height:11px;border:1px solid #555;border-top-width:2px;box-sizing:border-box;background:#fff"></div>
<div style="position:absolute;left:3px;top:811px;width:904px;height:20px;background:#cfdcec"></div>
<div style="position:absolute;left:59px;top:811px;width:848px;height:1px;background:#8e96a2"></div>
<div style="position:absolute;left:3px;top:830px;width:55px;height:1px;background:#8e96a2"></div>
<svg style="position:absolute;left:57px;top:827px;" width="3" height="4" viewBox="0 0 3 4"><path d="M0 3.5 L2.5 1 V0" stroke="#8e96a2" fill="none"/></svg>
<div style="position:absolute;left:59px;top:811px;width:1px;height:17px;background:#8e96a2"></div>
<div style="position:absolute;left:132px;top:812px;width:1px;height:18px;background:#8e96a2"></div>
<div style="position:absolute;left:246px;top:812px;width:1px;height:18px;background:#8e96a2"></div>
<div style="position:absolute;left:384px;top:812px;width:1px;height:18px;background:#8e96a2"></div>
<div style="position:absolute;left:464px;top:812px;width:1px;height:18px;background:#8e96a2"></div>
<div style="position:absolute;left:594px;top:812px;width:1px;height:18px;background:#8e96a2"></div>
<div style="position:absolute;left:672px;top:812px;width:1px;height:18px;background:#8e96a2"></div>
<div style="position:absolute;left:737px;top:812px;width:1px;height:18px;background:#8e96a2"></div>
<div style="position:absolute;left:811px;top:812px;width:1px;height:18px;background:#8e96a2"></div>
<div class="t" style="left:7.5px;top:814px;font-size:12px;line-height:14px;font-weight:normal;color:#000;letter-spacing:-0.252px;">Overview</div>
<div class="t" style="left:64px;top:814px;font-size:12px;line-height:14px;font-weight:normal;color:#000;letter-spacing:-0.086px;">Descriptions</div>
<div class="t" style="left:137.4px;top:814px;font-size:12px;line-height:14px;font-weight:normal;color:#000;letter-spacing:-0.187px;word-spacing:0.115px;">Source relationships</div>
<div class="t" style="left:251.3px;top:814px;font-size:12px;line-height:14px;font-weight:normal;color:#000;letter-spacing:-0.068px;word-spacing:0.041px;">Destination relationships</div>
<div class="t" style="left:389.4px;top:814px;font-size:12px;line-height:14px;font-weight:normal;color:#000;letter-spacing:-0.094px;">Memberships</div>
<div class="t" style="left:469.2px;top:814px;font-size:12px;line-height:14px;font-weight:normal;color:#000;letter-spacing:-0.362px;word-spacing:0.227px;">SNOMED CT Mappings</div>
<div class="t" style="left:599.2px;top:814px;font-size:12px;line-height:14px;font-weight:normal;color:#000;letter-spacing:0.018px;">All mappings</div>
<div class="t" style="left:677px;top:814px;font-size:12px;line-height:14px;font-weight:normal;color:#000;letter-spacing:-0.458px;">References</div>
<div class="t" style="left:741.8px;top:814px;font-size:12px;line-height:14px;font-weight:normal;color:#000;letter-spacing:-0.112px;">Visualization</div>
<div style="position:absolute;left:912px;top:1px;width:128px;height:28px;background:linear-gradient(#e2e8f0,#ffffff)"></div>
<div style="position:absolute;left:1040px;top:1px;width:5px;height:28px;background:#eef0f8"></div>
<div style="position:absolute;left:912px;top:29px;width:133px;height:1px;background:#7a7a7a"></div>
<div style="position:absolute;left:912px;top:1px;width:1px;height:28px;background:#d6dae2"></div>
<svg style="position:absolute;left:917px;top:6px;" width="17" height="17" viewBox="0 0 17 17"><rect x="3.6" y="9" width="9.2" height="7" fill="#c6def6" stroke="#86a6cc" stroke-width="0.7"/><path d="M5 14 L8 11 M8 14 L11 11" stroke="#a8c0dc" stroke-width="0.6"/><rect x="1.6" y="9" width="1.8" height="7.2" fill="#f4ece0" stroke="#9a8474" stroke-width="0.5"/><rect x="13" y="9" width="1.8" height="7.2" fill="#f4ece0" stroke="#9a8474" stroke-width="0.5"/><path d="M1 16.3 H3.6 M12.8 16.3 H15.4" stroke="#3a2a2a" stroke-width="0.9"/><path d="M0.4 9 Q0.4 3 1.4 1 H15 Q16 3 16 9 Q14.5 10 13 9 Q11.5 10 10 9 Q8.2 10 6.4 9 Q4.8 10 3.4 9 Q1.8 10 0.4 9 Z" fill="#e04a4a" stroke="#c03030" stroke-width="0.5"/><g fill="#ffd4d4"><rect x="3.8" y="1.2" width="2.2" height="7.4"/><rect x="7.2" y="1.2" width="2.2" height="7.6"/><rect x="10.6" y="1.2" width="2.2" height="7.4"/></g><path d="M1 6.5 H15.5" stroke="#fff" stroke-width="1" opacity="0.5"/></svg>
<div class="t" style="left:937.3px;top:8px;font-size:12px;line-height:14px;font-weight:normal;color:#000;letter-spacing:-0.607px;word-spacing:0.375px;">Reference Sets</div>
<svg style="position:absolute;left:1021px;top:10px;" width="10" height="10" viewBox="0 0 10 10"><path d="M0.5 0.5 L3 0.5 L5 2.5 L7 0.5 L9.5 0.5 L9.5 3 L7.5 5 L9.5 7 L9.5 9.5 L7 9.5 L5 7.5 L3 9.5 L0.5 9.5 L0.5 7 L2.5 5 L0.5 3 Z" fill="#fff" stroke="#555" stroke-width="1"/></svg>
<div class="t" style="left:973.9px;top:33px;font-size:12px;line-height:14px;font-weight:normal;color:#7a7a82;letter-spacing:-0.083px;word-spacing:0.051px;">Filter refsets</div>
<div style="position:absolute;left:913px;top:49px;width:132px;height:1px;background:#c8c8c8"></div>
<div style="position:absolute;left:913px;top:50px;width:132px;height:18px;background:#d9d9d9"></div>
<svg style="position:absolute;left:924.5px;top:55.4px;" width="7" height="10" viewBox="0 0 7 10"><path d="M1.2 1.2 L5.2 5 L1.2 8.8" stroke="#a4a4a4" stroke-width="1.6" fill="none"/></svg>
<svg style="position:absolute;left:935px;top:50.4px;" width="16" height="17" viewBox="0 0 16 17"><path d="M3.5 1.5 L11 1.5 L14.5 5 L14.5 16 L3.5 16 Z" fill="#f6f8fd" stroke="#8e949a" stroke-width="0.9"/>
<path d="M11 1.5 L11 5 L14.5 5" fill="#e8ecf2" stroke="#9aa0a6" stroke-width="0.6"/>
<g stroke="#bccbe6" stroke-width="0.7"><path d="M4.2 4.5 H11 M4.2 6.5 H14 M4.2 8.5 H14 M4.2 10.5 H14 M4.2 12.5 H14 M4.2 14.5 H14"/></g>
<path d="M6 2 V15.5" stroke="#eab0b8" stroke-width="0.7"/></svg>
<div class="t" style="left:986.7px;top:52px;font-size:12px;line-height:14px;font-weight:normal;color:#000;">tation type</div>
<svg style="position:absolute;left:924.5px;top:73.4px;" width="7" height="10" viewBox="0 0 7 10"><path d="M1.2 1.2 L5.2 5 L1.2 8.8" stroke="#a4a4a4" stroke-width="1.6" fill="none"/></svg>
<svg style="position:absolute;left:935px;top:68.4px;" width="16" height="17" viewBox="0 0 16 17"><path d="M3.5 1.5 L11 1.5 L14.5 5 L14.5 16 L3.5 16 Z" fill="#f6f8fd" stroke="#8e949a" stroke-width="0.9"/>
<path d="M11 1.5 L11 5 L14.5 5" fill="#e8ecf2" stroke="#9aa0a6" stroke-width="0.6"/>
<g stroke="#bccbe6" stroke-width="0.7"><path d="M4.2 4.5 H11 M4.2 6.5 H14 M4.2 8.5 H14 M4.2 10.5 H14 M4.2 12.5 H14 M4.2 14.5 H14"/></g>
<path d="M6 2 V15.5" stroke="#eab0b8" stroke-width="0.7"/></svg>
<div class="t" style="left:989.3px;top:70px;font-size:12px;line-height:14px;font-weight:normal;color:#1c1a8a;">ute value type</div>
<svg style="position:absolute;left:924.5px;top:91.4px;" width="7" height="10" viewBox="0 0 7 10"><path d="M1.2 1.2 L5.2 5 L1.2 8.8" stroke="#a4a4a4" stroke-width="1.6" fill="none"/></svg>
<svg style="position:absolute;left:935px;top:86.4px;" width="16" height="17" viewBox="0 0 16 17"><path d="M3.5 1.5 L11 1.5 L14.5 5 L14.5 16 L3.5 16 Z" fill="#f6f8fd" stroke="#8e949a" stroke-width="0.9"/>
<path d="M11 1.5 L11 5 L14.5 5" fill="#e8ecf2" stroke="#9aa0a6" stroke-width="0.6"/>
<g stroke="#bccbe6" stroke-width="0.7"><path d="M4.2 4.5 H11 M4.2 6.5 H14 M4.2 8.5 H14 M4.2 10.5 H14 M4.2 12.5 H14 M4.2 14.5 H14"/></g>
<path d="M6 2 V15.5" stroke="#eab0b8" stroke-width="0.7"/></svg>
<div class="t" style="left:988.6px;top:88px;font-size:12px;line-height:14px;font-weight:normal;color:#1c1a8a;">to expression</div>
<svg style="position:absolute;left:924.5px;top:109.4px;" width="7" height="10" viewBox="0 0 7 10"><path d="M1.2 1.2 L5.2 5 L1.2 8.8" stroke="#a4a4a4" stroke-width="1.6" fill="none"/></svg>
<svg style="position:absolute;left:935px;top:104.4px;" width="16" height="17" viewBox="0 0 16 17"><path d="M3.5 1.5 L11 1.5 L14.5 5 L14.5 16 L3.5 16 Z" fill="#f6f8fd" stroke="#8e949a" stroke-width="0.9"/>
<path d="M11 1.5 L11 5 L14.5 5" fill="#e8ecf2" stroke="#9aa0a6" stroke-width="0.6"/>
<g stroke="#bccbe6" stroke-width="0.7"><path d="M4.2 4.5 H11 M4.2 6.5 H14 M4.2 8.5 H14 M4.2 10.5 H14 M4.2 12.5 H14 M4.2 14.5 H14"/></g>
<path d="M6 2 V15.5" stroke="#eab0b8" stroke-width="0.7"/></svg>
<div class="t" style="left:983.6px;top:106px;font-size:12px;line-height:14px;font-weight:normal;color:#1c1a8a;">plex map extended</div>
<svg style="position:absolute;left:924.5px;top:127.4px;" width="7" height="10" viewBox="0 0 7 10"><path d="M1.2 1.2 L5.2 5 L1.2 8.8" stroke="#a4a4a4" stroke-width="1.6" fill="none"/></svg>
<svg style="position:absolute;left:935px;top:122.4px;" width="16" height="17" viewBox="0 0 16 17"><path d="M3.5 1.5 L11 1.5 L14.5 5 L14.5 16 L3.5 16 Z" fill="#f6f8fd" stroke="#8e949a" stroke-width="0.9"/>
<path d="M11 1.5 L11 5 L14.5 5" fill="#e8ecf2" stroke="#9aa0a6" stroke-width="0.6"/>
<g stroke="#bccbe6" stroke-width="0.7"><path d="M4.2 4.5 H11 M4.2 6.5 H14 M4.2 8.5 H14 M4.2 10.5 H14 M4.2 12.5 H14 M4.2 14.5 H14"/></g>
<path d="M6 2 V15.5" stroke="#eab0b8" stroke-width="0.7"/></svg>
<div class="t" style="left:983.6px;top:124px;font-size:12px;line-height:14px;font-weight:normal;color:#1c1a8a;">plex map type</div>
<svg style="position:absolute;left:935px;top:140.4px;" width="16" height="17" viewBox="0 0 16 17"><path d="M3.5 1.5 L11 1.5 L14.5 5 L14.5 16 L3.5 16 Z" fill="#f6f8fd" stroke="#8e949a" stroke-width="0.9"/>
<path d="M11 1.5 L11 5 L14.5 5" fill="#e8ecf2" stroke="#9aa0a6" stroke-width="0.6"/>
<g stroke="#bccbe6" stroke-width="0.7"><path d="M4.2 4.5 H11 M4.2 6.5 H14 M4.2 8.5 H14 M4.2 10.5 H14 M4.2 12.5 H14 M4.2 14.5 H14"/></g>
<path d="M6 2 V15.5" stroke="#eab0b8" stroke-width="0.7"/></svg>
<div class="t" style="left:986.5px;top:142px;font-size:12px;line-height:14px;font-weight:normal;color:#b2b2b2;">ept model ref</div>
<svg style="position:absolute;left:924.5px;top:163.4px;" width="7" height="10" viewBox="0 0 7 10"><path d="M1.2 1.2 L5.2 5 L1.2 8.8" stroke="#a4a4a4" stroke-width="1.6" fill="none"/></svg>
<svg style="position:absolute;left:935px;top:158.4px;" width="16" height="17" viewBox="0 0 16 17"><path d="M3.5 1.5 L11 1.5 L14.5 5 L14.5 16 L3.5 16 Z" fill="#f6f8fd" stroke="#8e949a" stroke-width="0.9"/>
<path d="M11 1.5 L11 5 L14.5 5" fill="#e8ecf2" stroke="#9aa0a6" stroke-width="0.6"/>
<g stroke="#bccbe6" stroke-width="0.7"><path d="M4.2 4.5 H11 M4.2 6.5 H14 M4.2 8.5 H14 M4.2 10.5 H14 M4.2 12.5 H14 M4.2 14.5 H14"/></g>
<path d="M6 2 V15.5" stroke="#eab0b8" stroke-width="0.7"/></svg>
<div class="t" style="left:989.2px;top:160px;font-size:12px;line-height:14px;font-weight:normal;color:#000;">ption format</div>
<svg style="position:absolute;left:924.5px;top:181.4px;" width="7" height="10" viewBox="0 0 7 10"><path d="M1.2 1.2 L5.2 5 L1.2 8.8" stroke="#a4a4a4" stroke-width="1.6" fill="none"/></svg>
<svg style="position:absolute;left:935px;top:176.4px;" width="16" height="17" viewBox="0 0 16 17"><path d="M3.5 1.5 L11 1.5 L14.5 5 L14.5 16 L3.5 16 Z" fill="#f6f8fd" stroke="#8e949a" stroke-width="0.9"/>
<path d="M11 1.5 L11 5 L14.5 5" fill="#e8ecf2" stroke="#9aa0a6" stroke-width="0.6"/>
<g stroke="#bccbe6" stroke-width="0.7"><path d="M4.2 4.5 H11 M4.2 6.5 H14 M4.2 8.5 H14 M4.2 10.5 H14 M4.2 12.5 H14 M4.2 14.5 H14"/></g>
<path d="M6 2 V15.5" stroke="#eab0b8" stroke-width="0.7"/></svg>
<div class="t" style="left:989.2px;top:178px;font-size:12px;line-height:14px;font-weight:normal;color:#1c1a8a;">ption map</div>
<svg style="position:absolute;left:935px;top:194.4px;" width="16" height="17" viewBox="0 0 16 17"><path d="M3.5 1.5 L11 1.5 L14.5 5 L14.5 16 L3.5 16 Z" fill="#f6f8fd" stroke="#8e949a" stroke-width="0.9"/>
<path d="M11 1.5 L11 5 L14.5 5" fill="#e8ecf2" stroke="#9aa0a6" stroke-width="0.6"/>
<g stroke="#bccbe6" stroke-width="0.7"><path d="M4.2 4.5 H11 M4.2 6.5 H14 M4.2 8.5 H14 M4.2 10.5 H14 M4.2 12.5 H14 M4.2 14.5 H14"/></g>
<path d="M6 2 V15.5" stroke="#eab0b8" stroke-width="0.7"/></svg>
<div class="t" style="left:989.3px;top:196px;font-size:12px;line-height:14px;font-weight:normal;color:#b2b2b2;">sion history</div>
<svg style="position:absolute;left:924.5px;top:217.4px;" width="7" height="10" viewBox="0 0 7 10"><path d="M1.2 1.2 L5.2 5 L1.2 8.8" stroke="#a4a4a4" stroke-width="1.6" fill="none"/></svg>
<svg style="position:absolute;left:937px;top:213.4px;" width="13" height="15" viewBox="0 0 13 15"><rect x="0.5" y="0.5" width="12" height="14" rx="1" fill="#f0902a" stroke="#c86a18"/><g fill="#fff"><rect x="2" y="3" width="3" height="1.5"/><rect x="7" y="3" width="4" height="1.5"/><rect x="2" y="6.5" width="3" height="1.5"/><rect x="7" y="6.5" width="4" height="1.5"/><rect x="2" y="9.5" width="3" height="3"/><rect x="7" y="10" width="4" height="1.5"/></g></svg>
<div class="t" style="left:957.5px;top:214px;font-size:12px;line-height:14px;font-weight:normal;color:#1c1a8a;">Extended map type</div>
<svg style="position:absolute;left:935px;top:230.4px;" width="16" height="17" viewBox="0 0 16 17"><path d="M3.5 1.5 L11 1.5 L14.5 5 L14.5 16 L3.5 16 Z" fill="#f6f8fd" stroke="#8e949a" stroke-width="0.9"/>
<path d="M11 1.5 L11 5 L14.5 5" fill="#e8ecf2" stroke="#9aa0a6" stroke-width="0.6"/>
<g stroke="#bccbe6" stroke-width="0.7"><path d="M4.2 4.5 H11 M4.2 6.5 H14 M4.2 8.5 H14 M4.2 10.5 H14 M4.2 12.5 H14 M4.2 14.5 H14"/></g>
<path d="M6 2 V15.5" stroke="#eab0b8" stroke-width="0.7"/></svg>
<div class="t" style="left:957.5px;top:232px;font-size:12px;line-height:14px;font-weight:normal;color:#b2b2b2;">Intensional definition</div>
<svg style="position:absolute;left:924.5px;top:253.4px;" width="7" height="10" viewBox="0 0 7 10"><path d="M1.2 1.2 L5.2 5 L1.2 8.8" stroke="#a4a4a4" stroke-width="1.6" fill="none"/></svg>
<svg style="position:absolute;left:935px;top:248.4px;" width="16" height="17" viewBox="0 0 16 17"><path d="M3.5 1.5 L11 1.5 L14.5 5 L14.5 16 L3.5 16 Z" fill="#f6f8fd" stroke="#8e949a" stroke-width="0.9"/>
<path d="M11 1.5 L11 5 L14.5 5" fill="#e8ecf2" stroke="#9aa0a6" stroke-width="0.6"/>
<g stroke="#bccbe6" stroke-width="0.7"><path d="M4.2 4.5 H11 M4.2 6.5 H14 M4.2 8.5 H14 M4.2 10.5 H14 M4.2 12.5 H14 M4.2 14.5 H14"/></g>
<path d="M6 2 V15.5" stroke="#eab0b8" stroke-width="0.7"/></svg>
<div class="t" style="left:957.5px;top:250px;font-size:12px;line-height:14px;font-weight:normal;color:#1c1a8a;">Map correlation and origin</div>
<svg style="position:absolute;left:924.5px;top:271.4px;" width="7" height="10" viewBox="0 0 7 10"><path d="M1.2 1.2 L5.2 5 L1.2 8.8" stroke="#a4a4a4" stroke-width="1.6" fill="none"/></svg>
<svg style="position:absolute;left:935px;top:266.4px;" width="16" height="17" viewBox="0 0 16 17"><path d="M3.5 1.5 L11 1.5 L14.5 5 L14.5 16 L3.5 16 Z" fill="#f6f8fd" stroke="#8e949a" stroke-width="0.9"/>
<path d="M11 1.5 L11 5 L14.5 5" fill="#e8ecf2" stroke="#9aa0a6" stroke-width="0.6"/>
<g stroke="#bccbe6" stroke-width="0.7"><path d="M4.2 4.5 H6 M4.2 6.5 H6 M4.2 8.5 H6 M4.2 10.5 H6 M4.2 12.5 H6 M4.2 14.5 H6"/></g>
<path d="M6 2 V15.5" stroke="#eab0b8" stroke-width="0.7"/>
<text x="7" y="9.6" font-family="Liberation Serif" font-size="5.8" font-weight="bold" fill="#222">01</text><text x="7" y="15" font-family="Liberation Serif" font-size="5.8" font-weight="bold" fill="#222">10</text></svg>
<div class="t" style="left:957.5px;top:268px;font-size:12px;line-height:14px;font-weight:normal;color:#1c1a8a;">MRCM reference set</div>
<svg style="position:absolute;left:935px;top:284.4px;" width="16" height="17" viewBox="0 0 16 17"><path d="M3.5 1.5 L11 1.5 L14.5 5 L14.5 16 L3.5 16 Z" fill="#f6f8fd" stroke="#8e949a" stroke-width="0.9"/>
<path d="M11 1.5 L11 5 L14.5 5" fill="#e8ecf2" stroke="#9aa0a6" stroke-width="0.6"/>
<g stroke="#bccbe6" stroke-width="0.7"><path d="M4.2 4.5 H11 M4.2 6.5 H14 M4.2 8.5 H14 M4.2 10.5 H14 M4.2 12.5 H14 M4.2 14.5 H14"/></g>
<path d="M6 2 V15.5" stroke="#eab0b8" stroke-width="0.7"/></svg>
<div class="t" style="left:957.5px;top:286px;font-size:12px;line-height:14px;font-weight:normal;color:#b2b2b2;">Ordered association</div>
<svg style="position:absolute;left:935px;top:302.4px;" width="16" height="17" viewBox="0 0 16 17"><path d="M3.5 1.5 L11 1.5 L14.5 5 L14.5 16 L3.5 16 Z" fill="#f6f8fd" stroke="#8e949a" stroke-width="0.9"/>
<path d="M11 1.5 L11 5 L14.5 5" fill="#e8ecf2" stroke="#9aa0a6" stroke-width="0.6"/>
<g stroke="#bccbe6" stroke-width="0.7"><path d="M4.2 4.5 H11 M4.2 6.5 H14 M4.2 8.5 H14 M4.2 10.5 H14 M4.2 12.5 H14 M4.2 14.5 H14"/></g>
<path d="M6 2 V15.5" stroke="#eab0b8" stroke-width="0.7"/></svg>
<div class="t" style="left:957.5px;top:304px;font-size:12px;line-height:14px;font-weight:normal;color:#b2b2b2;">Ordered component</div>
<svg style="position:absolute;left:924.5px;top:325.4px;" width="7" height="10" viewBox="0 0 7 10"><path d="M1.2 1.2 L5.2 5 L1.2 8.8" stroke="#a4a4a4" stroke-width="1.6" fill="none"/></svg>
<svg style="position:absolute;left:935px;top:320.4px;" width="16" height="17" viewBox="0 0 16 17"><path d="M3.5 1.5 L11 1.5 L14.5 5 L14.5 16 L3.5 16 Z" fill="#f6f8fd" stroke="#8e949a" stroke-width="0.9"/>
<path d="M11 1.5 L11 5 L14.5 5" fill="#e8ecf2" stroke="#9aa0a6" stroke-width="0.6"/>
<g stroke="#bccbe6" stroke-width="0.7"><path d="M4.2 4.5 H11 M4.2 6.5 H14 M4.2 8.5 H14 M4.2 10.5 H14 M4.2 12.5 H14 M4.2 14.5 H14"/></g>
<path d="M6 2 V15.5" stroke="#eab0b8" stroke-width="0.7"/></svg>
<div class="t" style="left:957.5px;top:322px;font-size:12px;line-height:14px;font-weight:normal;color:#1c1a8a;">Ordered type reference</div>
<svg style="position:absolute;left:924.5px;top:343.4px;" width="7" height="10" viewBox="0 0 7 10"><path d="M1.2 1.2 L5.2 5 L1.2 8.8" stroke="#a4a4a4" stroke-width="1.6" fill="none"/></svg>
<svg style="position:absolute;left:935px;top:338.4px;" width="16" height="17" viewBox="0 0 16 17"><path d="M3.5 1.5 L11 1.5 L14.5 5 L14.5 16 L3.5 16 Z" fill="#f6f8fd" stroke="#8e949a" stroke-width="0.9"/>
<path d="M11 1.5 L11 5 L14.5 5" fill="#e8ecf2" stroke="#9aa0a6" stroke-width="0.6"/>
<g stroke="#bccbe6" stroke-width="0.7"><path d="M4.2 4.5 H11 M4.2 6.5 H14 M4.2 8.5 H14 M4.2 10.5 H14 M4.2 12.5 H14 M4.2 14.5 H14"/></g>
<path d="M6 2 V15.5" stroke="#eab0b8" stroke-width="0.7"/></svg>
<div class="t" style="left:957.5px;top:340px;font-size:12px;line-height:14px;font-weight:normal;color:#1c1a8a;">Postcoordinated</div>
<svg style="position:absolute;left:924.5px;top:361.4px;" width="7" height="10" viewBox="0 0 7 10"><path d="M1.2 1.2 L5.2 5 L1.2 8.8" stroke="#a4a4a4" stroke-width="1.6" fill="none"/></svg>
<svg style="position:absolute;left:935px;top:356.4px;" width="17" height="17" viewBox="0 0 17 17"><rect x="5.5" y="1.5" width="10.5" height="10.5" fill="#ecbc84" stroke="#b8844c" stroke-width="0.7"/><rect x="9.6" y="1.5" width="2.4" height="4" fill="#c48a50"/><circle cx="8" cy="9.2" r="3.5" fill="#f6f6f6" stroke="#d4925a" stroke-width="1.5"/><path d="M5.4 11.8 L1.8 15.4" stroke="#d4803c" stroke-width="2.2" stroke-linecap="round"/></svg>
<div class="t" style="left:957.5px;top:358px;font-size:12px;line-height:14px;font-weight:normal;color:#1c1a8a;">Query specification</div>
<svg style="position:absolute;left:935px;top:374.4px;" width="16" height="17" viewBox="0 0 16 17"><path d="M3.5 1.5 L11 1.5 L14.5 5 L14.5 16 L3.5 16 Z" fill="#f6f8fd" stroke="#8e949a" stroke-width="0.9"/>
<path d="M11 1.5 L11 5 L14.5 5" fill="#e8ecf2" stroke="#9aa0a6" stroke-width="0.6"/>
<g stroke="#bccbe6" stroke-width="0.7"><path d="M4.2 4.5 H11 M4.2 6.5 H14 M4.2 8.5 H14 M4.2 10.5 H14 M4.2 12.5 H14 M4.2 14.5 H14"/></g>
<path d="M6 2 V15.5" stroke="#eab0b8" stroke-width="0.7"/></svg>
<div class="t" style="left:957.5px;top:376px;font-size:12px;line-height:14px;font-weight:normal;color:#b2b2b2;">Reference set descriptor</div>
<svg style="position:absolute;left:924.5px;top:397.4px;" width="7" height="10" viewBox="0 0 7 10"><path d="M1.2 1.2 L5.2 5 L1.2 8.8" stroke="#a4a4a4" stroke-width="1.6" fill="none"/></svg>
<svg style="position:absolute;left:935px;top:392.4px;" width="17" height="17" viewBox="0 0 17 17"><rect x="1.5" y="1.5" width="14" height="13" fill="#f4f6f8" stroke="#8a9098"/><rect x="3" y="3" width="11" height="10" fill="#8cc46c"/><path d="M3 6.3 H14 M3 9.6 H14 M6.6 3 V13 M10.3 3 V13" stroke="#b4dc90" stroke-width="0.6"/><rect x="10" y="3" width="4" height="4" fill="#7cc4f0"/><path d="M6.8 15.6 L15.6 7.4" stroke="#eec436" stroke-width="2.2"/><path d="M5.6 16.4 L6.9 15.3" stroke="#222" stroke-width="1.4"/><path d="M15 7.9 L16.2 6.8" stroke="#e86a8a" stroke-width="2"/></svg>
<div class="t" style="left:957.5px;top:394px;font-size:12px;line-height:14px;font-weight:normal;color:#1c1a8a;">Simple map</div>
<svg style="position:absolute;left:924.5px;top:415.4px;" width="7" height="10" viewBox="0 0 7 10"><path d="M1.2 1.2 L5.2 5 L1.2 8.8" stroke="#a4a4a4" stroke-width="1.6" fill="none"/></svg>
<svg style="position:absolute;left:935px;top:410.4px;" width="16" height="17" viewBox="0 0 16 17"><path d="M3.5 1.5 L11 1.5 L14.5 5 L14.5 16 L3.5 16 Z" fill="#f6f8fd" stroke="#8e949a" stroke-width="0.9"/>
<path d="M11 1.5 L11 5 L14.5 5" fill="#e8ecf2" stroke="#9aa0a6" stroke-width="0.6"/>
<g stroke="#bccbe6" stroke-width="0.7"><path d="M4.2 4.5 H11 M4.2 6.5 H14 M4.2 8.5 H14 M4.2 10.5 H14 M4.2 12.5 H14 M4.2 14.5 H14"/></g>
<path d="M6 2 V15.5" stroke="#eab0b8" stroke-width="0.7"/></svg>
<div class="t" style="left:957.5px;top:412px;font-size:12px;line-height:14px;font-weight:normal;color:#1c1a8a;">Simple type reference</div>
<div style="position:absolute;left:756px;top:25px;width:233px;height:194px;background:#ffffe1;border:1px solid #5a5a5a;box-sizing:border-box"></div>
<div style="position:absolute;left:765px;top:31px;width:1px;height:15px;background:#000"></div>
<div style="position:absolute;left:762px;top:51px;width:223px;height:1px;background:#8a8a7a"></div>
<div style="position:absolute;left:766px;top:172px;width:200px;height:19px;background:#d8d8c4"></div>
<svg style="position:absolute;left:766px;top:59px;" width="16" height="16" viewBox="0 0 16 16">
<rect x="0.2" y="6" width="3" height="3.7" fill="#16b2cc"/>
<g fill="#3d4fb4"><rect x="6.1" y="2" width="3.7" height="2.9"/><rect x="6.1" y="10.8" width="3.7" height="3"/>
<rect x="12.9" y="0" width="3" height="2.8"/><rect x="12.9" y="4.2" width="3" height="2.7"/><rect x="12.9" y="9.1" width="3" height="2.7"/><rect x="12.9" y="13.1" width="3" height="2.8"/></g></svg>
<div class="t" style="left:784.5px;top:61px;font-size:12px;line-height:14px;font-weight:bold;color:#000;letter-spacing:-0.341px;word-spacing:0.213px;-webkit-text-stroke:0.08px currentColor;">Discussed with doctor</div>
<svg style="position:absolute;left:766px;top:78px;" width="16" height="16" viewBox="0 0 16 16">
<path d="M0.6 7 Q0.4 1.8 3.8 1.6 Q7 1.8 6.8 7 Q6.6 10.5 5.8 12.6 Q5 14.8 3.6 14.4 Q1.6 13.8 1.1 10.5 Z" fill="#fcd38c"/>
<path d="M9.2 8.6 Q9 3.4 12.2 3.2 Q15.6 3.4 15.4 8.6 Q15.2 12 14.4 14 Q13.6 16 12.2 15.6 Q10.2 15.1 9.7 12 Z" fill="#fcd38c"/>
<rect x="6.4" y="1.4" width="1.2" height="3.8" fill="#28384e"/><rect x="8.5" y="1.6" width="1.2" height="3.6" fill="#6a5228"/>
<path d="M5.9 7 Q5.9 5 8 5 Q10.1 5 10.1 7 L10.1 12 Q10.1 13.8 8 13.8 Q5.9 13.8 5.9 12 Z" fill="#10a0d2"/>
<path d="M6.5 7.2 V11.8" stroke="#90e0fa" stroke-width="0.8"/></svg>
<div class="t" style="left:784.5px;top:80px;font-size:12px;line-height:14px;font-weight:bold;color:#000;letter-spacing:-0.252px;word-spacing:0.154px;-webkit-text-stroke:0.08px currentColor;">Industrial accident</div>
<svg style="position:absolute;left:766px;top:97px;" width="16" height="16" viewBox="0 0 16 16">
<path d="M0.6 7 Q0.4 1.8 3.8 1.6 Q7 1.8 6.8 7 Q6.6 10.5 5.8 12.6 Q5 14.8 3.6 14.4 Q1.6 13.8 1.1 10.5 Z" fill="#fcd38c"/>
<path d="M9.2 8.6 Q9 3.4 12.2 3.2 Q15.6 3.4 15.4 8.6 Q15.2 12 14.4 14 Q13.6 16 12.2 15.6 Q10.2 15.1 9.7 12 Z" fill="#fcd38c"/>
<rect x="6.4" y="1.4" width="1.2" height="3.8" fill="#28384e"/><rect x="8.5" y="1.6" width="1.2" height="3.6" fill="#6a5228"/>
<path d="M5.9 7 Q5.9 5 8 5 Q10.1 5 10.1 7 L10.1 12 Q10.1 13.8 8 13.8 Q5.9 13.8 5.9 12 Z" fill="#10a0d2"/>
<path d="M6.5 7.2 V11.8" stroke="#90e0fa" stroke-width="0.8"/></svg>
<div class="t" style="left:784.5px;top:99px;font-size:12px;line-height:14px;font-weight:normal;color:#000;letter-spacing:-0.043px;word-spacing:0.026px;">Accidental event</div>
<svg style="position:absolute;left:766px;top:116px;" width="16" height="16" viewBox="0 0 16 16">
<rect x="0" y="1" width="4" height="1.4" fill="#1f68b8"/>
<rect x="1" y="2.4" width="2" height="1.2" fill="#2a7ad0"/>
<rect x="0.6" y="3.4" width="2.8" height="7.4" fill="#86ccf2"/>
<path d="M0.6 5.5 H2.4 M0.6 7.5 H2 M0.6 9.5 H2.4" stroke="#4a9ee0" stroke-width="0.6"/>
<rect x="0" y="10.8" width="4" height="2" fill="#ea3a1c"/>
<rect x="1" y="12.8" width="2" height="1.6" fill="#d84a30"/>
<rect x="1.5" y="14.4" width="1" height="1.2" fill="#d86a50"/>
<rect x="5.3" y="2.3" width="10.4" height="12.6" rx="1.2" fill="#1e6ec8" stroke="#1a58a0" stroke-width="0.6"/>
<rect x="6.6" y="3.6" width="7.8" height="4.8" rx="1" fill="#b6f04a"/>
<rect x="7.4" y="4.8" width="5.6" height="2" rx="0.6" fill="#3e8c12"/>
<g fill="#a6ecff"><rect x="6.6" y="9.4" width="2.1" height="1.8"/><rect x="9.5" y="9.4" width="2.1" height="1.8"/><rect x="12.4" y="9.4" width="2.1" height="1.8"/>
<rect x="6.6" y="12" width="2.1" height="1.8"/><rect x="9.5" y="12" width="2.1" height="1.8"/><rect x="12.4" y="12" width="2.1" height="1.8"/></g></svg>
<div class="t" style="left:784.5px;top:118px;font-size:12px;line-height:14px;font-weight:normal;color:#000;letter-spacing:0.121px;">Blood compatibility test</div>
<svg style="position:absolute;left:766px;top:135px;" width="16" height="16" viewBox="0 0 16 16">
<path d="M0.3 0.8 L2.6 2 L4.8 0.6 L4.4 3.4 Q3.6 5 4.6 7.4 L6.2 11 Q6.8 14 5 14 Q1.8 13.6 1.4 9.4 Q1 6.2 2.4 3.8 Z" fill="#1a8ce0"/>
<path d="M5.2 8.6 Q5 4.4 8.2 3.6 L8.2 1 L10.4 2.6 L13.4 0.8 L13.2 4 Q15.8 5.6 15.6 10 Q15.2 15.6 10.6 15.6 Q5.6 15.2 5.2 10.4 Z" fill="#f04c38"/>
<path d="M7.5 6.5 Q10 8 12.5 11" stroke="#c8301e" stroke-width="0.7" fill="none"/></svg>
<div class="t" style="left:784.5px;top:137px;font-size:12px;line-height:14px;font-weight:normal;color:#000;letter-spacing:-0.154px;word-spacing:0.099px;">Blood in eye</div>
<svg style="position:absolute;left:766px;top:154px;" width="16" height="16" viewBox="0 0 16 16">
<rect x="0.2" y="6" width="3" height="3.7" fill="#16b2cc"/>
<g fill="#3d4fb4"><rect x="6.1" y="2" width="3.7" height="2.9"/><rect x="6.1" y="10.8" width="3.7" height="3"/>
<rect x="12.9" y="0" width="3" height="2.8"/><rect x="12.9" y="4.2" width="3" height="2.7"/><rect x="12.9" y="9.1" width="3" height="2.7"/><rect x="12.9" y="13.1" width="3" height="2.8"/></g></svg>
<div class="t" style="left:784.5px;top:156px;font-size:12px;line-height:14px;font-weight:normal;color:#000;letter-spacing:0.066px;">Family employment circumstance</div>
<svg style="position:absolute;left:766px;top:173px;" width="16" height="16" viewBox="0 0 16 16">
<rect x="0" y="1" width="4" height="1.4" fill="#1f68b8"/>
<rect x="1" y="2.4" width="2" height="1.2" fill="#2a7ad0"/>
<rect x="0.6" y="3.4" width="2.8" height="7.4" fill="#86ccf2"/>
<path d="M0.6 5.5 H2.4 M0.6 7.5 H2 M0.6 9.5 H2.4" stroke="#4a9ee0" stroke-width="0.6"/>
<rect x="0" y="10.8" width="4" height="2" fill="#ea3a1c"/>
<rect x="1" y="12.8" width="2" height="1.6" fill="#d84a30"/>
<rect x="1.5" y="14.4" width="1" height="1.2" fill="#d86a50"/>
<rect x="5.3" y="2.3" width="10.4" height="12.6" rx="1.2" fill="#1e6ec8" stroke="#1a58a0" stroke-width="0.6"/>
<rect x="6.6" y="3.6" width="7.8" height="4.8" rx="1" fill="#b6f04a"/>
<rect x="7.4" y="4.8" width="5.6" height="2" rx="0.6" fill="#3e8c12"/>
<g fill="#a6ecff"><rect x="6.6" y="9.4" width="2.1" height="1.8"/><rect x="9.5" y="9.4" width="2.1" height="1.8"/><rect x="12.4" y="9.4" width="2.1" height="1.8"/>
<rect x="6.6" y="12" width="2.1" height="1.8"/><rect x="9.5" y="12" width="2.1" height="1.8"/><rect x="12.4" y="12" width="2.1" height="1.8"/></g></svg>
<div class="t" style="left:784.5px;top:175px;font-size:12px;line-height:14px;font-weight:normal;color:#000;letter-spacing:-0.142px;word-spacing:0.087px;">General treatment</div>
<svg style="position:absolute;left:766px;top:192px;" width="16" height="16" viewBox="0 0 16 16">
<path d="M8 14.8 L1.8 8.8 Q-0.4 6.2 1.2 3.6 Q3.4 0.8 6.4 2.4 L8 3.8 L9.6 2.4 Q12.6 0.8 14.8 3.6 Q16.4 6.2 14.2 8.8 Z" fill="#ea4632" stroke="#c4302a" stroke-width="0.7"/>
<path d="M1.6 8 L4.2 8 L5.6 4.6 L7 11 L8.4 6.4 L9.4 9 L10.4 7.6 L12.6 8.2" stroke="#fff" stroke-width="1.1" fill="none" stroke-linejoin="round"/></svg>
<div class="t" style="left:784.5px;top:194px;font-size:12px;line-height:14px;font-weight:normal;color:#000;letter-spacing:-0.051px;word-spacing:0.032px;">Haemorrhage of eyelid</div>
</body></html>
